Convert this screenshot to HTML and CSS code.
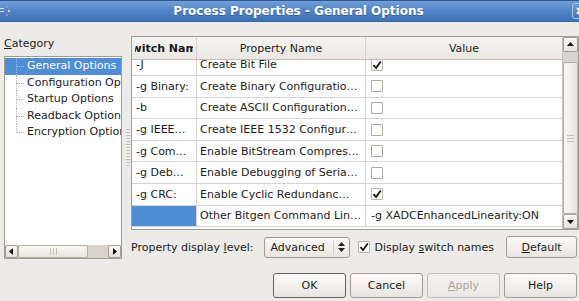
FILE: index.html
```html
<!DOCTYPE html>
<html lang="en">
<head>
  <meta charset="UTF-8">
  <title>Process Properties - General Options</title>
  <link rel="stylesheet" href="styles.css">
</head>
<body>
<div class="dialog">

  <!-- Barre de titre -->
  <div class="titlebar">
    <svg class="app-icon" width="11" height="12" viewBox="0 0 11 12">
      <rect x="0" y="3" width="4" height="1" fill="#cfe0f5"/>
      <rect x="0" y="6" width="4" height="1" fill="#cfe0f5"/>
      <rect x="6" y="1" width="2" height="2" fill="#b07ad8"/>
      <rect x="8" y="5" width="2" height="2" fill="#e6d36a"/>
      <rect x="6" y="9" width="2" height="2" fill="#b07ad8"/>
    </svg>
    <span class="title">Process Properties - General Options</span>
    <span class="close-btn">
      <svg width="8" height="8" viewBox="0 0 8 8"><path d="M1 1L7 7M7 1L1 7" stroke="#fff" stroke-width="2"/></svg>
    </span>
  </div>

  <div class="main">
    <!-- Catégories -->
    <div class="category">
      <div class="category-label"><u>C</u>ategory</div>
      <div class="tree">
        <ul class="tree-list">
          <li class="tree-item selected">General Options</li>
          <li class="tree-item">Configuration Options</li>
          <li class="tree-item">Startup Options</li>
          <li class="tree-item">Readback Options</li>
          <li class="tree-item last">Encryption Options</li>
        </ul>
        <div class="hscroll">
          <span class="sb-btn">
            <svg width="5" height="7" viewBox="0 0 5 7"><path d="M4 0V7L0 3.5Z" fill="#111"/></svg>
          </span>
          <span class="hs-thumb"><span class="grip-v"></span></span>
          <span class="hs-trough"></span>
          <span class="sb-btn">
            <svg width="5" height="7" viewBox="0 0 5 7"><path d="M1 0V7L5 3.5Z" fill="#111"/></svg>
          </span>
        </div>
      </div>
    </div>

    <div class="splitter"><span class="splitter-grip"></span></div>

    <!-- Tableau des propriétés -->
    <div class="props">
      <div class="grid-frame">
        <div class="grid">
          <div class="grid-head">
            <div class="head-cell col-switch sorted"><span class="head-clip"><span>Switch Name</span></span></div>
            <div class="head-cell col-prop">Property Name</div>
            <div class="head-cell col-value">Value</div>
          </div>
          <div class="grid-body">
            <div class="grid-rows">
              <div class="row">
                <div class="cell col-switch">-J</div>
                <div class="cell col-prop">Create Bit File</div>
                <div class="cell col-value"><span class="check checked"><svg width="10" height="10" viewBox="0 0 10 10"><path d="M1.5 5.2L4 8L8.8 1.5" fill="none" stroke="#111" stroke-width="1.8"/></svg></span></div>
              </div>
              <div class="row">
                <div class="cell col-switch">-g Binary:</div>
                <div class="cell col-prop">Create Binary Configuratio…</div>
                <div class="cell col-value"><span class="check"></span></div>
              </div>
              <div class="row">
                <div class="cell col-switch">-b</div>
                <div class="cell col-prop">Create ASCII Configuration…</div>
                <div class="cell col-value"><span class="check"></span></div>
              </div>
              <div class="row">
                <div class="cell col-switch">-g IEEE…</div>
                <div class="cell col-prop">Create IEEE 1532 Configur…</div>
                <div class="cell col-value"><span class="check"></span></div>
              </div>
              <div class="row">
                <div class="cell col-switch">-g Com…</div>
                <div class="cell col-prop">Enable BitStream Compres…</div>
                <div class="cell col-value"><span class="check"></span></div>
              </div>
              <div class="row">
                <div class="cell col-switch">-g Deb…</div>
                <div class="cell col-prop">Enable Debugging of Seria…</div>
                <div class="cell col-value"><span class="check"></span></div>
              </div>
              <div class="row">
                <div class="cell col-switch">-g CRC:</div>
                <div class="cell col-prop">Enable Cyclic Redundanc…</div>
                <div class="cell col-value"><span class="check checked"><svg width="10" height="10" viewBox="0 0 10 10"><path d="M1.5 5.2L4 8L8.8 1.5" fill="none" stroke="#111" stroke-width="1.8"/></svg></span></div>
              </div>
              <div class="row">
                <div class="cell col-switch selected"></div>
                <div class="cell col-prop">Other Bitgen Command Lin…</div>
                <div class="cell col-value">-g XADCEnhancedLinearity:ON</div>
              </div>
            </div>
          </div>
        </div>
        <div class="vscroll">
          <span class="sb-btn v">
            <svg width="7" height="5" viewBox="0 0 7 5"><path d="M0 4H7L3.5 0Z" fill="#111"/></svg>
          </span>
          <span class="vs-trough"></span>
          <span class="vs-thumb"><span class="grip-h"></span></span>
          <span class="sb-btn v">
            <svg width="7" height="5" viewBox="0 0 7 5"><path d="M0 1H7L3.5 5Z" fill="#111"/></svg>
          </span>
        </div>
      </div>

      <div class="options-row">
        <span>Property display <u>l</u>evel:</span>
        <span class="combo">
          <span class="combo-text">Advanced</span>
          <span class="combo-arrows">
            <svg width="7" height="10" viewBox="0 0 7 10"><path d="M0 4H7L3.5 0Z M0 6H7L3.5 10Z" fill="#222"/></svg>
          </span>
        </span>
        <span class="check opt-check checked"><svg width="10" height="10" viewBox="0 0 10 10"><path d="M1.5 5.2L4 8L8.8 1.5" fill="none" stroke="#111" stroke-width="1.8"/></svg></span>
        <span class="opt-label">Display <u>s</u>witch names</span>
        <button class="btn btn-default"><u>D</u>efault</button>
      </div>
    </div>
  </div>

  <!-- Boutons du bas -->
  <div class="button-row">
    <button class="btn btn-ok">OK</button>
    <button class="btn">Cancel</button>
    <button class="btn" disabled><u>A</u>pply</button>
    <button class="btn">Help</button>
  </div>

</div>
</body>
</html>
```

FILE: styles.css
```css
body {
  margin: 0;
  width: 579px;
  height: 301px;
  overflow: hidden;
  background-color: #edebe7;
  font-family: "DejaVu Sans", "Liberation Sans", sans-serif;
  font-size: 11px;
  color: #1c1c1c;
}

.dialog {
  width: 579px;
  height: 301px;
  overflow: hidden;
}

/* Barre de titre */
.titlebar {
  height: 22px;
  box-sizing: border-box;
  border-top: 1px solid #2d578e;
  border-bottom: 1px solid #3a679f;
  background: linear-gradient(#73a0d9, #5286c8 45%, #3f72b6);
  display: flex;
  align-items: center;
  overflow: hidden;
}

.app-icon {
  flex: none;
  margin-left: 0;
}

.title {
  flex: 1;
  text-align: center;
  color: #fff;
  font-weight: bold;
  font-size: 12px;
  padding-left: 14px;
  text-shadow: 0 1px 0 #355f98;
}

.close-btn {
  flex: none;
  width: 16px;
  height: 16px;
  margin-right: -9px;
  box-sizing: border-box;
  border: 1px solid #a9c4e8;
  border-radius: 3px;
  background: linear-gradient(#6d9bd6, #4376bb);
  display: flex;
  align-items: center;
  justify-content: center;
}

/* Zone principale */
.main {
  display: flex;
  padding-top: 14px;
  height: 223px;
}

.category {
  width: 118px;
  margin-left: 4px;
  display: flex;
  flex-direction: column;
  flex: none;
}

.category-label {
  height: 20px;
  line-height: 15px;
}

.tree {
  flex: 1;
  box-sizing: border-box;
  border: 1px solid #a19d95;
  background: #fff;
  display: flex;
  flex-direction: column;
}

.tree-list {
  flex: 1;
  list-style: none;
  margin: 0;
  padding: 1px 0 0;
  overflow: hidden;
}

.tree-item {
  position: relative;
  height: 16.5px;
  line-height: 16.5px;
  padding-left: 22px;
  white-space: nowrap;
  overflow: hidden;
}

.tree-item::before {
  content: "";
  position: absolute;
  left: 11px;
  top: 8px;
  width: 8px;
  border-top: 1px dotted #b4b4b4;
}

.tree-item::after {
  content: "";
  position: absolute;
  left: 11px;
  top: 0;
  bottom: 0;
  border-left: 1px dotted #b4b4b4;
}

.tree-item.last::after {
  bottom: 8px;
}

.tree-item.selected {
  background: #4f8ed6;
  color: #fff;
}

.tree-item.selected::before,
.tree-item.selected::after {
  border-color: #9cc0ea;
}

/* Barres de défilement */
.hscroll {
  display: flex;
  height: 13px;
  background: #d8d3cc;
}

.sb-btn {
  flex: none;
  width: 13px;
  box-sizing: border-box;
  border: 1px solid #a39e96;
  border-radius: 2px;
  background: linear-gradient(#faf9f8, #e6e2dc);
  display: flex;
  align-items: center;
  justify-content: center;
}

.hs-thumb {
  width: 70px;
  box-sizing: border-box;
  border: 1px solid #b3aea6;
  border-radius: 2px;
  background: linear-gradient(#f8f7f5, #e9e6e1);
  display: flex;
  align-items: center;
  justify-content: center;
}

.grip-v {
  width: 7px;
  height: 7px;
  background: repeating-linear-gradient(90deg, #c3beb6 0 1px, transparent 1px 3px);
}

.hs-trough {
  flex: 1;
}

.splitter {
  width: 9px;
  flex: none;
  display: flex;
  align-items: center;
}

.splitter-grip {
  margin-left: 4px;
  width: 4px;
  height: 37px;
  background: repeating-linear-gradient(#c6c1b9 0 1px, transparent 1px 3px);
}

/* Tableau */
.props {
  width: 448px;
  flex: none;
  display: flex;
  flex-direction: column;
}

.grid-frame {
  height: 194px;
  box-sizing: border-box;
  border: 1px solid #a19d95;
  background: #fff;
  display: flex;
}

.grid {
  flex: 1;
  min-width: 0;
  display: flex;
  flex-direction: column;
}

.grid-head {
  display: flex;
  height: 23px;
  flex: none;
  box-sizing: border-box;
  border-bottom: 1px solid #c4bfb8;
  background: linear-gradient(#f4f3f1, #ebe8e4);
}

.head-cell {
  display: flex;
  align-items: center;
  justify-content: center;
  white-space: nowrap;
  overflow: hidden;
  box-sizing: border-box;
}

.head-cell.sorted {
  font-weight: bold;
  padding: 0 3px;
}

.head-clip {
  flex: 1;
  min-width: 0;
  display: flex;
  justify-content: center;
  overflow: hidden;
}

.col-switch {
  width: 65px;
  flex: none;
  border-right: 1px solid #d6d2cc;
}

.col-prop {
  width: 169px;
  flex: none;
  border-right: 1px solid #d6d2cc;
}

.col-value {
  flex: 1;
  min-width: 0;
}

.grid-body {
  flex: 1;
  overflow: hidden;
}

.grid-rows {
  margin-top: -5.5px;
}

.row {
  display: flex;
  height: 21.6px;
  box-sizing: border-box;
  border-bottom: 1px solid #d4d4d4;
}

.cell {
  display: flex;
  align-items: center;
  padding-left: 3px;
  white-space: nowrap;
  overflow: hidden;
  box-sizing: border-box;
}

.row .col-switch {
  padding-left: 4px;
  border-right-color: #d4d4d4;
}

.row .col-prop {
  border-right-color: #d4d4d4;
}

.row .col-value {
  padding-left: 5px;
}

.cell.selected {
  background: #4d8ed6;
}

.check {
  width: 12px;
  height: 12px;
  flex: none;
  box-sizing: border-box;
  border: 1px solid #aca89f;
  border-radius: 1px;
  background: #fff;
  display: flex;
  align-items: center;
  justify-content: center;
}

.check.checked {
  border-color: #b9b5ad;
}

.vscroll {
  width: 15px;
  flex: none;
  display: flex;
  flex-direction: column;
  background: #d8d3cc;
  border-left: 1px solid #c4bfb8;
}

.sb-btn.v {
  width: 15px;
  height: 15px;
}

.vs-trough {
  height: 10px;
}

.vs-thumb {
  flex: 1;
  box-sizing: border-box;
  border: 1px solid #b3aea6;
  border-radius: 2px;
  background: linear-gradient(90deg, #f8f7f5, #e9e6e1);
  display: flex;
  align-items: center;
  justify-content: center;
}

.grip-h {
  width: 7px;
  height: 7px;
  background: repeating-linear-gradient(#c3beb6 0 1px, transparent 1px 3px);
}

/* Ligne des options */
.options-row {
  display: flex;
  align-items: center;
  height: 22px;
  margin-top: 6px;
}

.combo {
  margin-left: 11px;
  width: 86px;
  height: 21px;
  box-sizing: border-box;
  border: 1px solid #a19c93;
  border-radius: 3px;
  background: linear-gradient(#fbfaf9, #e9e6e1);
  display: flex;
  align-items: center;
}

.combo-text {
  flex: 1;
  padding-left: 5px;
}

.combo-arrows {
  width: 15px;
  height: 15px;
  border-left: 1px solid #d1ccc5;
  display: flex;
  align-items: center;
  justify-content: center;
}

.opt-check {
  margin-left: 8px;
}

.opt-label {
  margin-left: 4px;
}

.btn {
  font-family: inherit;
  font-size: 11px;
  color: #1c1c1c;
  width: 73px;
  height: 25px;
  padding: 0;
  box-sizing: border-box;
  border: 1px solid #a19c93;
  border-radius: 3px;
  background: linear-gradient(#fcfbfa, #e8e5e0);
}

.btn-default {
  margin-left: auto;
  margin-right: 2px;
  width: 71px;
  height: 22px;
}

.btn-ok {
  border-color: #66635d;
}

.btn:disabled {
  color: #aaa69f;
  border-color: #c3beb6;
  background: linear-gradient(#f4f2ef, #ebe8e4);
}

/* Boutons du bas */
.button-row {
  display: flex;
  justify-content: flex-end;
  gap: 4px;
  padding-right: 2px;
  margin-top: 14px;
}
```
